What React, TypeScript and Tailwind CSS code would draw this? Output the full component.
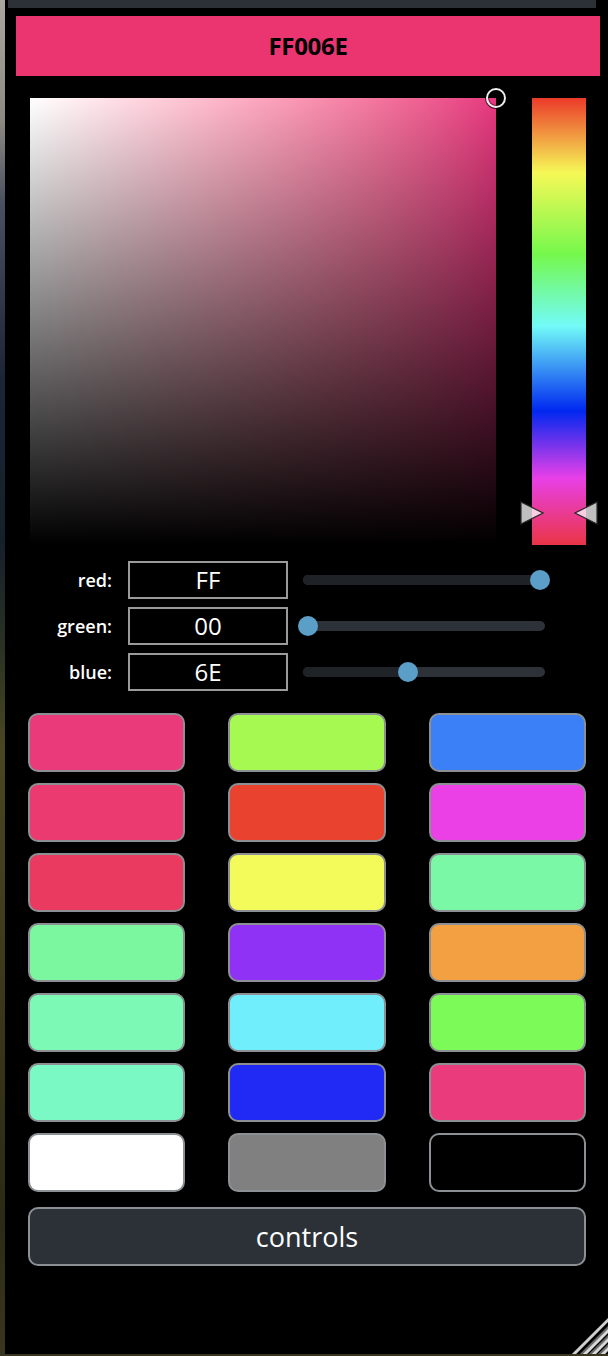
import React from "react";

const swatches = [
  "#EA3A7A", "#A5F951", "#3B80F6",
  "#EA3A6F", "#E9432F", "#EA40E6",
  "#EB3A60", "#F2FB59", "#7BF8A6",
  "#7BF7A0", "#9031F6", "#F2A041",
  "#7BF9B5", "#70EEFB", "#7BFA58",
  "#7BF9C5", "#2129F5", "#EA3B7D",
  "#FFFFFF", "#808080", "#000000",
];

const channels = [
  { label: "red:", hex: "FF", value: 255 },
  { label: "green:", hex: "00", value: 0 },
  { label: "blue:", hex: "6E", value: 110 },
];

function Slider({ value }: { value: number }) {
  const trackW = 242;
  const center = 5 + (value / 255) * (trackW - 10);
  return (
    <div className="relative flex h-[20px] w-[242px] items-center">
      <div className="flex h-[10px] w-full overflow-hidden rounded-full bg-[#2c3238]">
        <div className="h-full bg-[#1f2328]" style={{ width: center }} />
      </div>
      <div
        className="absolute top-0 h-[20px] w-[20px] rounded-full bg-[#5b9fc8]"
        style={{ left: center - 10 }}
      />
    </div>
  );
}

export default function App() {
  return (
    <div
      className="h-[1356px] w-[608px] overflow-hidden bg-[linear-gradient(to_bottom,#aaa6a0_0%,#8c8882_9%,#4a5060_15%,#1c2534_28%,#16202c_40%,#2a3322_48%,#4a4622_55%,#3e3a1c_70%,#2c2a16_90%,#3a3520_100%)]"
      style={{ fontFamily: '"Open Sans", "Noto Sans", sans-serif' }}
    >
      <div className="relative ml-[5px] flex h-[1354px] w-[603px] flex-col bg-black">
        {/* top bar */}
        <div className="ml-[3px] h-[8px] w-[588px] bg-[#2b3137]" />

        {/* header */}
        <div className="ml-[11px] mt-[8px] flex h-[60px] w-[584px] items-center justify-center bg-[#EA3570]">
          <span className="text-[24px] font-bold leading-none tracking-[-0.3px] text-black">FF006E</span>
        </div>

        {/* picker */}
        <div className="ml-[25px] mt-[22px] flex">
          <div className="relative h-[447px] w-[466px] bg-linear-to-r from-white to-[#E7377F]">
            <div className="absolute inset-0 bg-linear-to-t from-black to-transparent" />
            <div className="absolute left-[456px] top-[-10px] h-[20px] w-[20px] rounded-full border-2 border-[#eeeeee] shadow-[0_0_0_1px_rgba(0,0,0,0.7),inset_0_0_0_1px_rgba(0,0,0,0.5)]" />
          </div>
          <div className="relative ml-[36px] h-[447px] w-[54px] bg-[linear-gradient(to_bottom,#eb3a2a_0%,#f6f857_16.7%,#75f84c_35%,#72fbf8_51%,#0028f0_70%,#e840e8_85%,#ea3545_100%)]">
            <svg
              className="absolute left-[-12px] top-[403px]"
              width="24"
              height="24"
              viewBox="0 0 24 24"
            >
              <polygon points="1,1 1,23 23,12" fill="rgba(255,255,255,0.75)" stroke="#2a2a2a" strokeWidth="1.2" />
            </svg>
            <svg
              className="absolute left-[42px] top-[403px]"
              width="24"
              height="24"
              viewBox="0 0 24 24"
            >
              <polygon points="23,1 23,23 1,12" fill="rgba(255,255,255,0.75)" stroke="#2a2a2a" strokeWidth="1.2" />
            </svg>
          </div>
        </div>

        {/* rgb rows */}
        <div className="mt-[16px] flex flex-col gap-[8px]">
          {channels.map((c) => (
            <div key={c.label} className="flex h-[38px] items-center">
              <div className="w-[107px] text-right text-[18px] font-semibold leading-none text-white">
                {c.label}
              </div>
              <div className="ml-[16px] flex h-[38px] w-[160px] items-center justify-center border-2 border-[#9a9a9a] bg-black text-[24px] leading-none text-white">
                {c.hex}
              </div>
              <div className="ml-[15px]">
                <Slider value={c.value} />
              </div>
            </div>
          ))}
        </div>

        {/* swatches */}
        <div className="ml-[23px] mt-[22px] grid w-[558px] grid-cols-3 gap-x-[43px] gap-y-[11px]">
          {swatches.map((s, i) => (
            <div
              key={i}
              className="h-[59px] rounded-[10px] border-2 border-[#8c9094]"
              style={{ backgroundColor: s }}
            />
          ))}
        </div>

        {/* controls */}
        <div className="ml-[23px] mt-[15px] flex h-[59px] w-[558px] items-center justify-center rounded-[10px] border-2 border-[#8c9094] bg-[#2b3137]">
          <span className="text-[27px] font-medium leading-none text-white">controls</span>
        </div>

        {/* resize grip */}
        <svg className="absolute bottom-0 right-0" width="38" height="38" viewBox="0 0 38 38">
          <defs>
            <clipPath id="grip">
              <polygon points="38,0 38,38 0,38" />
            </clipPath>
          </defs>
          <g clipPath="url(#grip)" strokeWidth="3">
            <line x1="0" y1="42" x2="42" y2="0" stroke="#cfcfcf" />
            <line x1="6" y1="44" x2="44" y2="6" stroke="#6a6a6a" />
            <line x1="9" y1="44" x2="44" y2="9" stroke="#d8d8d8" />
            <line x1="15" y1="44" x2="44" y2="15" stroke="#6a6a6a" />
            <line x1="18" y1="44" x2="44" y2="18" stroke="#d8d8d8" />
            <line x1="24" y1="44" x2="44" y2="24" stroke="#6a6a6a" />
            <line x1="27" y1="44" x2="44" y2="27" stroke="#d8d8d8" />
          </g>
        </svg>
      </div>
    </div>
  );
}
